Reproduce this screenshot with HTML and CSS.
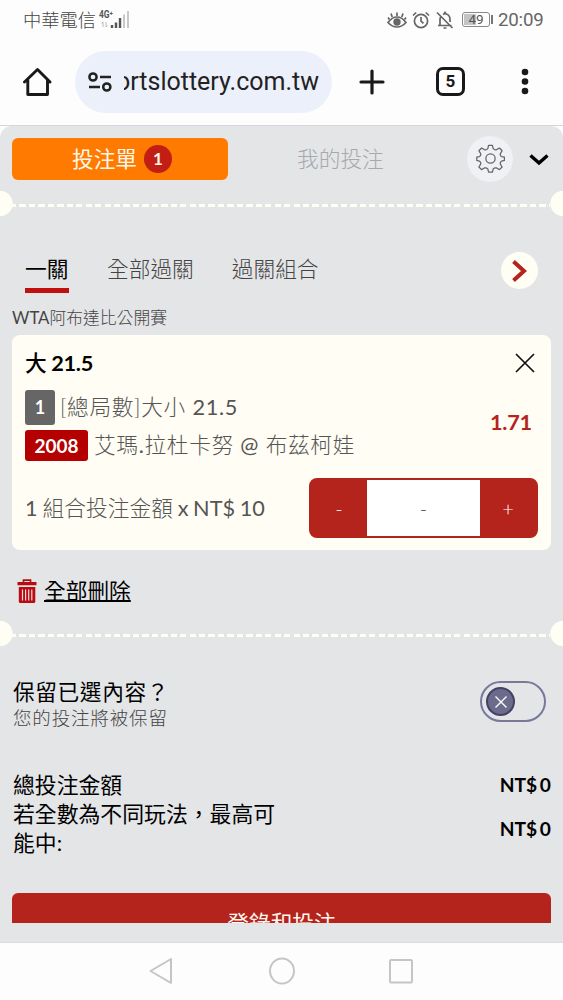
FILE: index.html
```html
<!DOCTYPE html>
<html lang="zh-Hant">
<head>
<meta charset="utf-8">
<title>投注單</title>
<link rel="stylesheet" href="styles.css">
</head>
<body>
<div class="phone">
  <header class="status">
    <span class="carrier">中華電信</span>
    <svg class="signal" width="34" height="22" viewBox="0 0 34 22">
      <text class="net" x="1" y="10" textLength="14" lengthAdjust="spacingAndGlyphs">4G⁺</text>
      <path d="M5 14v5M3.500 15.500 5 14M8 14v5M9.500 17.500 8 19" stroke="#bbb" fill="none"/>
      <path d="M14 17v3M18 14.500V20M22 10v10" stroke="#555" stroke-width="2.400"/>
      <path d="M26 6.500V20M30 3v17" stroke="#c8c8c8" stroke-width="2"/>
    </svg>
    <span class="grow"></span>
    <svg class="eye" width="20" height="18" viewBox="0 0 20 18" fill="none" stroke="#666" stroke-width="1.700">
      <path d="M1 11.500Q5 6 10 6t9 5.500Q15 16 10 16T1 11.500Z"/><circle cx="10" cy="11" r="3.700" fill="#666" stroke="none"/><path d="M10 5V1.500M5.200 6 4 2.500M14.800 6 16 2.500M2.500 8.500 1 6.500M17.500 8.500 19 6.500"/>
    </svg>
    <svg class="alarm" width="18" height="18" viewBox="0 0 18 18" fill="none" stroke="#666" stroke-width="1.700">
      <circle cx="9" cy="10" r="6.600"/><path d="M9 6v4.200l2.500 2.200M1 4.500 4.200 1.500M17 4.500 13.800 1.500"/>
    </svg>
    <svg class="mute" width="18" height="18" viewBox="0 0 18 18" fill="none" stroke="#666" stroke-width="1.700">
      <path d="M2 14.500h13.500M4 14V8.500q0-2 1.200-3.300M7 3.500 8 3l1-1.500L10 3q4 1 4 5.500V11M1 1.500 16.500 17M7.500 17h3"/>
    </svg>
    <span class="battery"><span class="level"></span><span class="pct">49</span></span><span class="tip"></span>
    <span class="clock">20:09</span>
  </header>

  <nav class="toolbar">
    <svg class="home" width="30" height="30" viewBox="0 0 30 30" fill="none" stroke="#191919" stroke-width="2.900" stroke-linejoin="round" stroke-linecap="round"><path d="M2.500 15 15.500 2.500 28 15M5.800 13v14.500h19.700V13"/></svg>
    <div class="address">
      <svg width="24" height="20" viewBox="0 0 24 20" fill="none" stroke="#222" stroke-width="2.500"><circle cx="5" cy="5" r="3.600"/><path d="M12 5h11M1 15h11"/><circle cx="18.800" cy="15" r="3.600"/></svg>
      <div class="url"><span>ortslottery.com.tw</span></div>
    </div>
    <svg class="plus" width="26" height="26" viewBox="0 0 26 26" stroke="#191919" stroke-width="3.200" stroke-linecap="round"><path d="M13 2v22M2 13h22"/></svg>
    <span class="tabs">5</span>
    <svg class="dots" width="8" height="28" viewBox="0 0 8 28" fill="#191919"><circle cx="4" cy="4" r="3.300"/><circle cx="4" cy="13.500" r="3.300"/><circle cx="4" cy="23" r="3.300"/></svg>
  </nav>

  <div class="page">
  <main class="slip">
    <div class="head">
      <div class="tab-on"><span class="name">投注單</span><span class="count">1</span></div>
      <div class="tab-off">我的投注</div>
      <div class="gear">
        <svg width="29" height="29" viewBox="0 0 30 30" fill="none" stroke="#666" stroke-width="1.300" stroke-linejoin="round"><circle cx="15" cy="15" r="4.800"/><path d="M13 1.500h4l.8 3.300q1.500 1.700 3.500 1l3-1.600 2.700 2.800-1.800 3q-.6 2 1.200 3l3 .6v3.400l-3 .8q-1.800 1-1.200 3l1.800 3-2.700 2.700-3-1.700q-2-.6-3.500 1l-.8 3.200h-4l-.8-3.200q-1.500-1.600-3.500-1l-3 1.700L3 23.800l1.800-3q.6-2-1.200-3L.8 17v-3.400l2.800-.6q1.800-1 1.200-3L3 7l2.700-2.800 3 1.600q2 .7 3.500-1Z"/></svg>
      </div>
      <svg class="down" width="20" height="14" viewBox="0 0 20 14" fill="none" stroke="#000" stroke-width="3.400"><path d="M1.500 2.500 10 10l8.500-7.500"/></svg>
    </div>
    <div class="rip"></div>

    <div class="kinds">
      <span class="kind now">一關</span>
      <span class="kind">全部過關</span>
      <span class="kind">過關組合</span>
      <span class="next"><svg width="16" height="22" viewBox="0 0 16 22" fill="none" stroke="#b5241c" stroke-width="4"><path d="M1.500 1.500 12 11 1.500 20.500"/></svg></span>
    </div>
    <div class="league"><span class="latin">WTA</span>阿布達比公開賽</div>

    <section class="card">
      <div class="title"><span class="name"><span class="big">大</span> <b>21.5</b></span>
        <svg width="20" height="20" viewBox="0 0 20 20" stroke="#111" stroke-width="1.700"><path d="M1 1l18 18M19 1 1 19"/></svg>
      </div>
      <div class="pick">
        <div class="lines">
          <div class="line"><span class="tag grey">1</span><span class="market">[總局數]大小 <span class="latin">21.5</span></span></div>
          <div class="line"><span class="tag red">2008</span><span class="match">艾瑪<span class="latin">.</span>拉杜卡努 <span class="latin">@</span> 布茲柯娃</span></div>
        </div>
        <div class="odds">1.71</div>
      </div>
      <div class="stake">
        <span class="combo"><span class="latin">1</span> 組合投注金額 <span class="latin">x NT$ 10</span></span>
        <div class="stepper"><span>-</span><span class="amount">-</span><span>+</span></div>
      </div>
    </section>

    <div class="clear">
      <svg width="20" height="25" viewBox="0 0 20 25"><path d="M6.500 3V1.200h7V3" fill="none" stroke="#b80c12" stroke-width="1.700"/><path d="M.5 3h19v3.200H.5ZM1.800 8h16.500v14.500q0 1.500-1.500 1.500H3.300q-1.500 0-1.500-1.500Z" fill="#b80c12"/><path d="M5.500 10.500v11M8.600 10.500v11M11.700 10.500v11M14.800 10.500v11" stroke="#f1dada" stroke-width="1.200"/></svg>
      <span>全部刪除</span>
    </div>
    <div class="rip"></div>

    <div class="keep">
      <div><div class="ask">保留已選內容？</div><div class="note">您的投注將被保留</div></div>
      <div class="switch"><span class="knob"><svg width="14" height="14" viewBox="0 0 14 14" stroke="#fff" stroke-width="1.400"><path d="M1.500 1.500l11 11M12.500 1.500l-11 11"/></svg></span></div>
    </div>
    <div class="sum"><span>總投注金額</span><span class="money">NT$ 0</span></div>
    <div class="sum max"><span class="long">若全數為不同玩法，最高可能中:</span><span class="money">NT$ 0</span></div>
    <div class="submit"><span>登錄和投注</span></div>
  </main>
  </div>

  <footer class="keys">
    <svg width="24" height="28" viewBox="0 0 24 28"><path d="M22 2v24L1.500 14Z"/></svg>
    <svg width="28" height="28" viewBox="0 0 28 28"><ellipse cx="14" cy="14" rx="12" ry="12.500"/></svg>
    <svg width="26" height="28" viewBox="0 0 26 28"><rect x="2" y="3" width="22" height="22.500" rx="1"/></svg>
  </footer>
</div>
</body>
</html>
```
FILE: styles.css
```css
* { box-sizing: border-box; }
body { margin: 0; background: #fdfdfd; font-family: Lato, "Noto Sans CJK TC", sans-serif; }
svg { display: block; flex: none; }
.phone { width: 563px; height: 1000px; overflow: hidden; display: flex; flex-direction: column; white-space: nowrap; }
.grow { flex: 1; }
.latin { font-weight: 400; }

.status { height: 38px; display: flex; align-items: center; padding: 1px 18px 0 23px; color: #666; }
.carrier { font: 300 18.3px/24px "Noto Sans CJK TC", sans-serif; color: #444; padding-bottom: 2px; }
.signal { margin-left: 2px; margin-top: -2px; }
.net { font: 700 10px Roboto, sans-serif; fill: #555; }
.alarm { margin-left: 5px; }
.mute { margin-left: 6px; }
.battery { width: 28px; height: 15px; margin-left: 8px; border: 1px solid #888; border-radius: 3px; position: relative; display: flex; justify-content: center; align-items: center; }
.level { position: absolute; left: 1px; top: 1px; bottom: 1px; width: 12px; background: #c4c4c4; }
.pct { position: relative; font: 400 13.500px/13px Roboto, sans-serif; color: #555; }
.tip { width: 2px; height: 9px; background: #777; margin-left: 1px; }
.clock { font: 400 18.700px/22px Roboto, sans-serif; width: 47px; margin-left: 5px; color: #666; letter-spacing: -.2px; }

.toolbar { height: 87px; display: flex; align-items: center; padding-left: 22px; color: #191919; }
.address { width: 257px; height: 62px; margin-left: 23px; border-radius: 31px; background: #ecf0fa; display: flex; align-items: center; padding-left: 13px; }
.url { margin-left: 12px; width: 195px; overflow: hidden; display: flex; justify-content: flex-end; font: 400 25px/34px Roboto, sans-serif; color: #222; padding-top: 1px; }
.plus { margin-left: 27px; }
.tabs { width: 29px; height: 29px; margin-left: 51px; border: 3px solid #191919; border-radius: 7px; font: 700 17px/23px Roboto, sans-serif; text-align: center; }
.dots { margin-left: 56px; }

.page { height: 818px; border-top: 1px solid #d5d6d6; border-bottom: 1px solid #dcdcda; background: #fdfdfd; }
.slip { height: 816px; background: #e4e5e7; border-radius: 12px 12px 0 0; overflow: hidden; }
.head { height: 65px; display: flex; align-items: center; padding-left: 12px; }
.tab-on { width: 216px; height: 42px; border-radius: 6px; background: #ff7a00; color: #fff8e8; display: flex; align-items: center; justify-content: center; gap: 7px; font-size: 21.7px; padding-left: 4px; }
.name { padding-bottom: 3px; }
.count { width: 28px; height: 28px; border-radius: 50%; background: #c21e14; font: 700 17px/27px Lato, sans-serif; text-align: center; }
.tab-off { margin-left: 69px; font-weight: 300; font-size: 21.7px; color: #a6a8ab; width: 88px; padding-bottom: 2px; }
.gear { width: 46px; height: 46px; margin-left: 82px; border-radius: 50%; background: #f0f1f4; display: flex; align-items: center; justify-content: center; }
.down { margin-left: 16px; margin-top: 2px; }
.rip { height: 25px; background:
  radial-gradient(circle at 0 12.500px, #fffef4 12.300px, transparent 13px),
  radial-gradient(circle at 563px 12.500px, #fffef4 12.300px, transparent 13px),
  repeating-linear-gradient(90deg, #fffef4 0 6.300px, transparent 6.300px 9.450px) 9.500px 12.500px / 540px 3.300px no-repeat; }

.kinds { height: 77px; padding: 30px 25px 0; display: flex; font-size: 21.7px; line-height: 46px; font-weight: 300; color: #444; align-items: flex-start; }
.kind { margin-right: 38px; height: 47px; }
.now { color: #000; font-weight: 400; border-bottom: 5px solid #c0100f; width: 44px; }
.next { width: 37px; height: 37px; margin: 6px 0 0 auto; border-radius: 50%; background: #fffef4; display: flex; align-items: center; justify-content: center; }
.league { height: 33px; padding: 13px 12px 0; margin-bottom: 9px; font-size: 16.800px; line-height: 24px; font-weight: 300; color: #444; }

.card { margin: 0 12px; width: 539px; height: 215px; border-radius: 8px; background: #fffdf4; padding: 8px 13px 0; color: #555; }
.title { height: 40px; display: flex; align-items: center; justify-content: space-between; font-size: 21.700px; color: #000; padding-right: 3px; }
.title b { font-weight: 700; letter-spacing: -.3px; margin-left: -1px; }
.big { font-weight: 500; }
.pick { display: flex; justify-content: space-between; margin-top: 7px; height: 71px; }
.lines { display: flex; flex-direction: column; gap: 4px; }
.line { display: flex; align-items: center; font-size: 21.700px; line-height: 35px; height: 35px; font-weight: 300; }
.line + .line { height: 32px; }
.tag { color: #fff; font: 700 18px/31px Lato, sans-serif; border-radius: 3px; text-align: center; }
.grey { width: 30px; line-height: 35px; background: #666; margin-right: 5px; }
.red { width: 63px; background: #b40000; margin-right: 6px; font-size: 19px; }
.market { letter-spacing: .65px; }
.match { letter-spacing: .65px; }
.odds { font-size: 21.700px; font-weight: 700; color: #b5241c; line-height: 65px; padding-right: 6px; letter-spacing: -.2px; }
.stake { display: flex; justify-content: space-between; align-items: center; margin-top: 17px; font-size: 21.700px; font-weight: 300; }
.combo { word-spacing: -1.300px; padding-bottom: 3px; letter-spacing: .1px; }
.stepper { width: 229px; height: 60px; border: 2px solid #b5241c; border-radius: 8px; background: #b5241c; display: grid; grid-template-columns: 56px 1fr 56px; color: #fff; text-align: center; line-height: 56px; font-size: 20px; }
.amount { background: #fff; color: #444; }

.clear { height: 71px; padding: 17px 0 0 17px; display: flex; gap: 7px; font-size: 21.700px; line-height: 49px; color: #000; }
.clear svg { margin-top: 12px; }
.clear span { text-decoration: underline; text-decoration-thickness: 2px; }

.keep { margin: 31px 12px 0; padding-left: 1px; height: 60px; display: flex; justify-content: space-between; }
.ask { font-size: 21.700px; line-height: 30px; letter-spacing: .6px; color: #000; }
.note { font-size: 18.500px; line-height: 23px; font-weight: 300; letter-spacing: .85px; color: #444; }
.switch { width: 66px; height: 41px; margin: 4px 5px 0 0; border: 2px solid #77789a; border-radius: 21px; display: flex; align-items: center; padding-left: 4px; }
.knob { width: 29px; height: 29px; border-radius: 50%; border: 2px solid #454064; background: #6b6b8b; display: flex; align-items: center; justify-content: center; }
.sum { margin: 0 12px; padding-left: 1px; display: flex; align-items: center; justify-content: space-between; font-size: 21.850px; line-height: 29px; color: #000; }
.keep + .sum { margin-top: 33px; }
.long { width: 268px; white-space: normal; }
.money { font-size: 19.200px; font-weight: 700; word-spacing: -2px; }
.submit { margin: 36px 12px 0; height: 30px; border-radius: 6px 6px 0 0; background: #b5241c; color: #fff8ef; text-align: center; font-size: 21.700px; line-height: 61px; overflow: hidden; }
.keys { height: 57px; display: flex; align-items: center; padding: 0 0 2px 149px; gap: 95px; }
.keys svg { fill: none; stroke: #c5c5c5; stroke-width: 2; stroke-linejoin: round; }
.keys svg:last-child { margin-left: -3px; }
```
